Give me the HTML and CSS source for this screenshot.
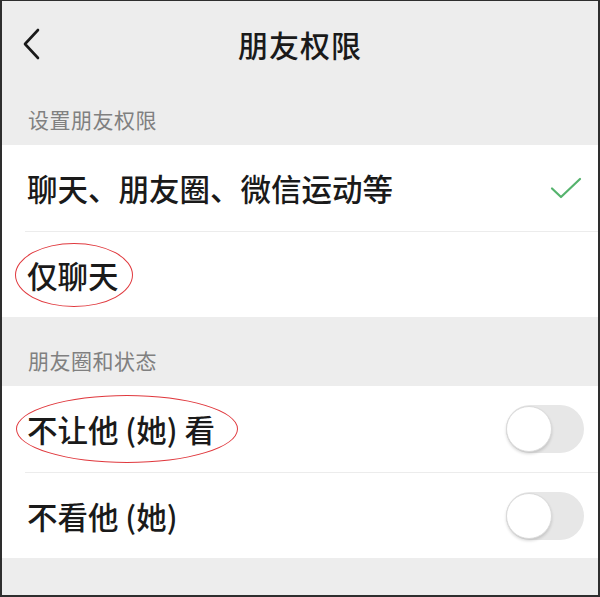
FILE: index.html
```html
<!DOCTYPE html>
<html lang="zh-CN">
<head>
    <meta charset="UTF-8">
    <meta name="viewport" content="width=device-width, initial-scale=1.0">
    <title>朋友权限</title>
    <link rel="stylesheet" href="styles.css">
</head>
<body>
    <div class="tela">
        <div class="topo">
            <svg class="voltar" width="18" height="32" viewBox="0 0 18 32">
                <polyline points="15,2 2,16 15,30" fill="none" stroke="#1a1a1a" stroke-width="2.6" stroke-linecap="round" stroke-linejoin="round"/>
            </svg>
            <h1 class="titulo">朋友权限</h1>
        </div>

        <div class="secao">设置朋友权限</div>
        <ul class="lista">
            <li class="item">
                <span>聊天、朋友圈、微信运动等</span>
                <svg class="check" width="32" height="22" viewBox="0 0 32 22">
                    <polyline points="2,11.5 11,20 30,2" fill="none" stroke="#55b36d" stroke-width="2.2" stroke-linecap="round" stroke-linejoin="round"/>
                </svg>
            </li>
            <li class="item">
                <span>仅聊天</span>
                <div class="marca marca-1"></div>
            </li>
        </ul>

        <div class="secao">朋友圈和状态</div>
        <ul class="lista">
            <li class="item">
                <span>不让他 (她) 看</span>
                <div class="chave"><div class="bola"></div></div>
                <div class="marca marca-2"></div>
            </li>
            <li class="item">
                <span>不看他 (她)</span>
                <div class="chave"><div class="bola"></div></div>
            </li>
        </ul>
    </div>
</body>
</html>
```

FILE: styles.css
```css
* {
    box-sizing: border-box;
}
body {
    margin: 0;
    font-family: "Noto Sans CJK SC", "Noto Sans", sans-serif;
}
div.tela {
    width: 600px;
    height: 597px;
    background-color: #ededed;
    border: 2px solid #2e2e2e;
    border-top-width: 1px;
    overflow: hidden;
}
div.topo {
    position: relative;
    height: 75px;
    display: flex;
    align-items: center;
    justify-content: center;
    padding-top: 10px;
}
svg.voltar {
    position: absolute;
    left: 21px;
    top: 27px;
}
h1.titulo {
    margin: 0;
    font-size: 30px;
    font-weight: 500;
    color: #1a1a1a;
    letter-spacing: 1px;
}
div.secao {
    height: 69px;
    display: flex;
    align-items: flex-end;
    padding: 0 0 11px 26px;
    font-size: 21px;
    color: #808080;
    letter-spacing: 0.5px;
}
ul.lista {
    list-style: none;
    margin: 0;
    padding: 0 0 0 23px;
    background-color: #fff;
}
li.item {
    position: relative;
    height: 86px;
    display: flex;
    align-items: center;
    justify-content: space-between;
    padding: 0 14px 0 2px;
    border-top: 1px solid #ececec;
    font-size: 30.5px;
    font-weight: 500;
    color: #1a1a1a;
}
li.item:first-child {
    border-top: none;
}
svg.check {
    margin-right: 2px;
}
div.chave {
    width: 78px;
    height: 48px;
    border-radius: 24px;
    background-color: #e7e7e7;
    position: relative;
}
div.bola {
    position: absolute;
    left: 0;
    top: 1px;
    width: 46px;
    height: 46px;
    border-radius: 50%;
    background-color: #fff;
    border: 1px solid #dadada;
    box-shadow: 0 2px 3px rgba(0, 0, 0, 0.15);
}
div.marca {
    position: absolute;
    border: 1.5px solid #e0393e;
    border-radius: 50%;
}
div.marca-1 {
    left: -10px;
    top: 11px;
    width: 118px;
    height: 64px;
}
div.marca-2 {
    left: -9px;
    top: 9px;
    width: 222px;
    height: 68px;
}
```
